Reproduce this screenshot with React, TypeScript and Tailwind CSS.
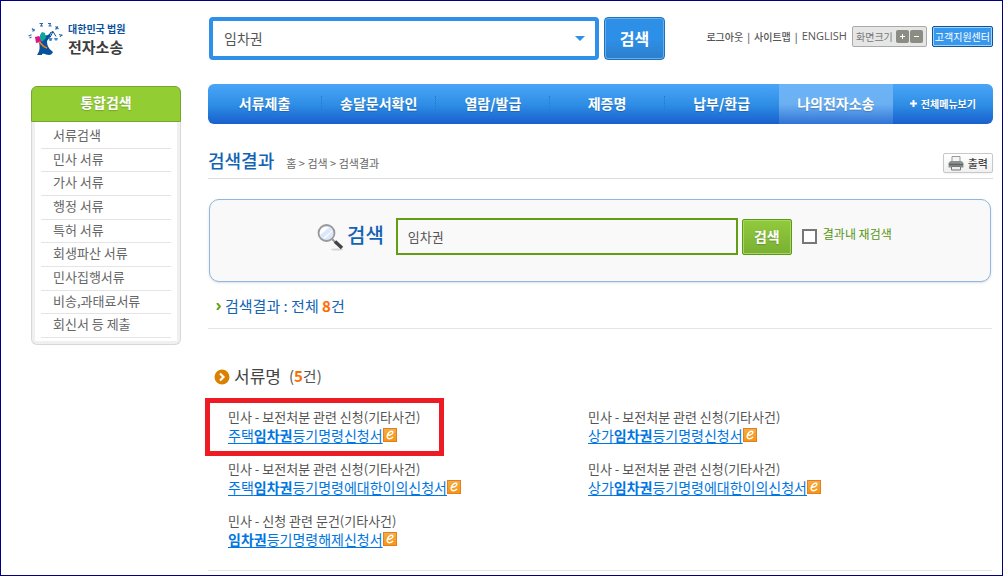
import React from 'react';

const menu = ['서류제출', '송달문서확인', '열람/발급', '제증명', '납부/환급', '나의전자소송'];

const sideItems = [
  '서류검색',
  '민사 서류',
  '가사 서류',
  '행정 서류',
  '특허 서류',
  '회생파산 서류',
  '민사집행서류',
  '비송,과태료서류',
  '회신서 등 제출',
];

type Result = { category: string; before: string; after: string; highlighted?: boolean };

const results: Result[] = [
  { category: '민사 - 보전처분 관련 신청(기타사건)', before: '주택', after: '등기명령신청서', highlighted: true },
  { category: '민사 - 보전처분 관련 신청(기타사건)', before: '상가', after: '등기명령신청서' },
  { category: '민사 - 보전처분 관련 신청(기타사건)', before: '주택', after: '등기명령에대한이의신청서' },
  { category: '민사 - 보전처분 관련 신청(기타사건)', before: '상가', after: '등기명령에대한이의신청서' },
  { category: '민사 - 신청 관련 문건(기타사건)', before: '', after: '등기명령해제신청서' },
];

function Emblem() {
  return (
    <svg viewBox="0 0 36 34" className="h-[34px] w-9 shrink-0" aria-hidden="true">
      <g fill="none" stroke="#2a6cab" strokeWidth="1.2">
        <path d="M0.500 14l3-1.200M1.500 16l2-1M4 6.500l2.500 2.500M4.500 9.500l2-2.500M11.500 1.500h3.500M12 4h3M13.500 1.500v3M20 1.500h3M20.500 4h3M22 1v3.500M27.500 4.500l3 2.500M27.500 7.500l2.500-3M31 12.500l3.500 1M32 15l2-2.500" />
      </g>
      <path d="M15 14l5-1 3-3-1 5-3 4c0 5 2 8 6 11-1 2-2 3-4 3-3 0-4-2-7-1v1H9c3-4 3-8 2-13z" fill="#0a519c" />
      <path d="M22 11l3-1.500M25 9.500l-3 6M25 9.500l3 5" fill="none" stroke="#0a519c" strokeWidth="1" />
      <path d="M20.500 16h4l-1 3h-2zM26 16h4l-1 2.500h-2z" fill="#4389c8" />
      <path d="M7 15l4-1 2 2v4l-5 1z" fill="#df168a" />
      <path d="M12 13l2-3 3 1 1 5-4 4-2-3z" fill="#0ca69c" />
      <path d="M11 20c2 0 3 5 8 6" fill="none" stroke="#f58220" strokeWidth="1.600" />
    </svg>
  );
}

function Magnifier() {
  return (
    <svg viewBox="0 0 28 28" className="size-7" aria-hidden="true">
      <ellipse cx="20" cy="26.500" rx="6" ry="1" fill="#d4d4d4" />
      <path d="M15 16l4 4" stroke="#999" strokeWidth="2" />
      <path d="M18 18.500l7 6.500" stroke="#444" strokeWidth="3.500" />
      <circle cx="9.500" cy="10" r="8" fill="#dbe7fb" stroke="#999" strokeWidth="1.800" />
      <path d="M3 12C2 6 7 3 12 4.500z" fill="#fff" />
      <path d="M7 15.500L15 8" stroke="#fff" strokeWidth="1.200" />
    </svg>
  );
}

function Printer() {
  return (
    <svg viewBox="0 0 16 15" className="h-[15px] w-4" aria-hidden="true">
      <path d="M4 .500h8V6H4z" fill="#f5f5f5" stroke="#999" />
      <path d="M2.500 5h11L15.500 7v4.500h-15V7z" fill="#8b8f90" />
      <path d="M1 8.500h14" stroke="#5e6263" strokeWidth="1.500" />
      <path d="M3.500 10.500h9V14h-9z" fill="#eee" stroke="#777" />
      <path d="M12 7h1.500" stroke="#74c98a" />
    </svg>
  );
}

function FormIcon() {
  return (
    <svg viewBox="0 0 14 14" className="size-3.5 shrink-0" aria-hidden="true">
      <defs>
        <linearGradient id="orange" x2="0" y2="1">
          <stop stopColor="#f3ae46" />
          <stop offset="1" stopColor="#f7940f" />
        </linearGradient>
      </defs>
      <rect x=".5" y=".5" width="13" height="13" fill="url(#orange)" stroke="#e77c22" />
      <path d="M5 7.300C7.500 7.300 9.800 6 9.800 4.300c0-1.600-2.300-1.300-3.800.2S3.300 8.800 4.700 10.200c1.300 1 3.800.2 5.300-1.200" fill="none" stroke="#fff" strokeWidth="1.500" />
    </svg>
  );
}

function Header() {
  return (
    <header className="flex h-[83px] items-start pt-4">
      <a href="#home" className="flex w-[181px] shrink-0 items-center gap-1 pt-1">
        <Emblem />
        <span className="flex flex-col font-bold">
          <span className="text-[10px] leading-4 text-[#0a519c]">대한민국 법원</span>
          <span className="text-[15px] leading-5 text-[#3c3c3c]">전자소송</span>
        </span>
      </a>
      <form className="flex shrink-0 gap-[5px]" onSubmit={(e) => e.preventDefault()}>
        <div className="flex h-[43px] w-[390px] items-center rounded border-4 border-[#2e90e8] bg-white pr-2.5 pl-[11px]">
          <input aria-label="통합검색어" defaultValue="임차권" className="min-w-0 flex-1 text-[14px] text-[#555] outline-none" />
          <button type="button" aria-label="검색어 목록">
            <svg viewBox="0 0 10 5" className="h-[5px] w-2.5"><path d="M0 0h10L5 5z" fill="#2e90e8" /></svg>
          </button>
        </div>
        <button className="h-[43px] w-[61px] rounded border border-[#1c73bd] bg-linear-to-b from-[#2d8fe6] via-[#2d90e8] to-[#2c7fca] pb-0.5 text-[16px] font-bold text-white inset-ring inset-ring-[#68aeea]">
          검색
        </button>
      </form>
      <div className="ml-auto flex items-center gap-[5px] pt-[9px] whitespace-nowrap">
        <nav aria-label="사용자 메뉴" className="flex items-center gap-1 text-[10px] font-medium text-[#555]">
          <a href="#logout">로그아웃</a>
          <span>|</span>
          <a href="#sitemap">사이트맵</a>
          <span>|</span>
          <a href="#english" className="font-['Open_Sans',sans-serif] text-[11px]">ENGLISH</a>
        </nav>
        <div className="flex h-[21px] items-center gap-px rounded-xs border border-[#aaa] bg-[#e6e6e6] px-[3px] text-[#777]">
          <span className="mr-0.5 text-[10px]">화면크기</span>
          <button aria-label="확대" className="flex size-[13px] items-center justify-center rounded-xs bg-[#8b8c83] text-white">
            <svg viewBox="0 0 7 7" className="size-[7px]"><path d="M1 3.500h5M3.500 1v5" stroke="currentColor" /></svg>
          </button>
          <button aria-label="축소" className="flex size-[13px] items-center justify-center rounded-xs bg-[#8b8c83] text-white">
            <svg viewBox="0 0 7 7" className="size-[7px]"><path d="M1 3.500h5" stroke="currentColor" /></svg>
          </button>
        </div>
        <a href="#support" className="flex h-[21px] items-center rounded-xs border border-[#0c56a0] bg-[#3898ee] px-0.5 text-[10px] text-white inset-ring inset-ring-[#a6d2f8]">
          고객지원센터
        </a>
      </div>
    </header>
  );
}

function Sidebar() {
  return (
    <aside className="mt-0.5 ml-[3px] w-[150px] shrink-0">
      <h2 className="flex h-9 items-center justify-center rounded-t-md border border-[#74a62c] bg-[#92ce33] pb-1 text-[14px] font-bold text-white text-shadow-xs">
        통합검색
      </h2>
      <div className="rounded-b-md border border-t-0 border-[#d8d8d8] bg-[#f0f0f0] px-[3px] pb-[3px]">
        <ul className="grid h-[219px] auto-rows-fr bg-white px-1.5 pt-[3px] pb-[3px]">
          {sideItems.map((item) => (
            <li key={item} className="border-b border-[#e4e4e4] pl-3 text-[13px] leading-5 text-[#666]">
              <a href="#documents" className="block">{item}</a>
            </li>
          ))}
        </ul>
      </div>
    </aside>
  );
}

function MainMenu() {
  return (
    <nav aria-label="주 메뉴" className="flex h-10 overflow-hidden rounded-md bg-linear-to-b from-[#49a5f8] via-[#2f8fe5] to-[#1b5fce] text-[14px] font-bold text-white text-shadow-xs">
      {menu.map((item, i) => (
        <a
          key={item}
          href="#menu"
          className={
            i === menu.length - 1
              ? 'flex flex-[114] items-center justify-center bg-linear-to-b from-[#6cb4f8] via-[#6bb0f1] to-[#3073d6] pb-0.5'
              : 'flex flex-[114] items-center justify-center pb-0.5'
          }
        >
          <span className="flex-1 text-center">{item}</span>
          {i < menu.length - 2 && <span className="h-3.5 border-r border-dotted border-[#2677c8]" />}
        </a>
      ))}
      <a href="#all" className="flex flex-[100] items-center justify-center gap-1 pb-0.5 text-[10px]">
        <svg viewBox="0 0 7 7" className="size-[7px]"><path d="M0 3.500h7M3.500 0v7" stroke="currentColor" strokeWidth="2" /></svg>
        전체메뉴보기
      </a>
    </nav>
  );
}

function ResultItem({ category, before, after, highlighted }: Result) {
  return (
    <li className="relative h-[52px] pl-5 text-[13px] leading-[18px] text-[#555]">
      {highlighted && <div className="pointer-events-none absolute -top-2.5 -left-[3px] h-[58px] w-[239px] border-[5px] border-[#ed1c24]" />}
      <p>{category}</p>
      <a href="#form" className="flex items-center text-[14px] text-[#0076e0]">
        <span className="underline underline-offset-2">
          {before}
          <strong>임차권</strong>
          {after}
        </span>
        <FormIcon />
      </a>
    </li>
  );
}

export default function App() {
  return (
    <div className="min-h-screen border border-[#000080] bg-white pr-[9px] pl-[27px] font-['Noto_Sans_CJK_KR',sans-serif]">
      <Header />
      <div className="flex items-start gap-[27px]">
        <Sidebar />
        <main className="min-w-0 flex-1">
          <MainMenu />
          <div className="flex h-[55px] items-end justify-between border-b border-[#dcdcdc] pb-[5px]">
            <div className="flex items-baseline gap-3">
              <h1 className="text-[18px] leading-[26px] font-medium text-[#1263b4]">검색결과</h1>
              <p className="text-[11px] text-[#666]">홈 &gt; 검색 &gt; 검색결과</p>
            </div>
            <button className="flex h-5 items-center gap-1 rounded-xs border border-[#c8c8c8] bg-linear-to-b from-white to-[#f0f0f0] px-1 text-[11px] font-medium text-[#444] shadow-xs">
              <Printer />
              출력
            </button>
          </div>
          <form
            onSubmit={(e) => e.preventDefault()}
            className="mt-5 mr-0.5 ml-px flex h-[83px] items-center rounded-[10px] border border-[#8fb8e0] bg-[#f9f9f9] pb-2 pl-[107px] shadow-sm"
          >
            <Magnifier />
            <label htmlFor="query" className="ml-0.5 pb-1 text-[20px] font-medium text-[#1263b4]">검색</label>
            <input
              id="query"
              defaultValue="임차권"
              className="ml-3 h-[37px] w-[342px] border-2 border-[#629d14] bg-[#f9f9f9] px-2.5 text-[13px] text-[#555] outline-none"
            />
            <button className="ml-1 h-9 w-[50px] rounded-xs border border-[#5c9a16] bg-linear-to-b from-[#91ca3c] to-[#79b034] text-[14px] font-bold text-white inset-ring inset-ring-[#a8d662] text-shadow-xs">
              검색
            </button>
            <label className="ml-2.5 flex items-center gap-1.5 text-[12px] text-[#569512]">
              <input type="checkbox" className="size-[15px] appearance-none border-2 border-[#777] bg-white checked:bg-[#629d14]" />
              <span className="pb-1.5">결과내 재검색</span>
            </label>
          </form>
          <div className="mr-px flex h-[47px] items-center gap-1 border-b border-[#e4e4e4] pt-0.5 pl-2 text-[15px] text-[#1263b4]">
            <svg viewBox="0 0 5 7" className="h-[7px] w-[5px]"><path d="M1 0l3 3.500L1 7" fill="none" stroke="#6aa312" strokeWidth="2" /></svg>
            <p>검색결과 : 전체 <strong className="text-[#ff6c00]">8</strong>건</p>
          </div>
          <section className="mr-px border-b border-[#e4e4e4]">
            <h2 className="flex items-center gap-1 pt-[35px] pl-1.5 leading-6 text-[#555]">
              <svg viewBox="0 0 16 16" className="size-4"><circle cx="8" cy="8" r="7.500" fill="#da8200" /><path d="M6 4.500L9.500 8 6 11.500" fill="none" stroke="#fff" strokeWidth="2.200" /></svg>
              <span className="pb-0.5 text-[17px] text-[#444]">서류명</span>
              <span className="pb-0.5 pl-1 text-[15px]">(<strong className="text-[#ff6c00]">5</strong>건)</span>
            </h2>
            <ul className="grid grid-cols-[360px_1fr] pt-[18px] pb-[6px]">
              {results.map((r) => (
                <ResultItem key={r.before + r.after} {...r} />
              ))}
            </ul>
          </section>
        </main>
      </div>
    </div>
  );
}
